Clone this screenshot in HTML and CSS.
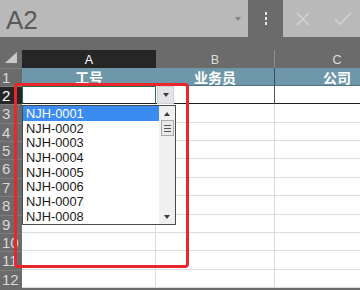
FILE: index.html
```html
<!DOCTYPE html>
<html lang="zh">
<head>
    <meta charset="UTF-8" />
    <meta name="viewport" content="width=device-width, initial-scale=1" />
    <title>数据验证下拉列表</title>
    <link rel="stylesheet" href="styles.css">
</head>
<body>
    <div class="app">
        <!-- Formula bar -->
        <div class="formula-bar">
            <div class="name-box">
                <span class="name">A2</span>
                <span class="name-arrow"></span>
            </div>
            <div class="menu">
                <i></i><i></i><i></i>
            </div>
            <div class="actions">
                <svg width="16" height="16" viewBox="0 0 16 16"><path d="M2 2 L14 14 M14 2 L2 14" stroke="#d2d2d2" stroke-width="1.6" fill="none"/></svg>
                <svg width="20" height="16" viewBox="0 0 20 16"><path d="M2 8 L7 13 L18 2" stroke="#d2d2d2" stroke-width="1.6" fill="none"/></svg>
            </div>
        </div>

        <!-- Sheet grid -->
        <div class="sheet">
            <div class="corner">
                <svg width="22" height="17" viewBox="0 0 22 17"><polygon points="17,2 17,13 5,13" fill="#c9c9c9"/></svg>
            </div>
            <div class="col-head active">A</div>
            <div class="col-head split">B</div>
            <div class="col-head">C</div>

            <div class="row-head">1</div>
            <div class="cell title">工号</div>
            <div class="cell title split">业务员</div>
            <div class="cell title">公司</div>

            <div class="row-head active">2</div>
            <div class="cell current"></div>
            <div class="cell edge split"></div>
            <div class="cell edge"></div>

            <div class="row-head">3</div><div class="cell"></div><div class="cell"></div><div class="cell"></div>
            <div class="row-head">4</div><div class="cell"></div><div class="cell"></div><div class="cell"></div>
            <div class="row-head">5</div><div class="cell"></div><div class="cell"></div><div class="cell"></div>
            <div class="row-head">6</div><div class="cell"></div><div class="cell"></div><div class="cell"></div>
            <div class="row-head">7</div><div class="cell"></div><div class="cell"></div><div class="cell"></div>
            <div class="row-head">8</div><div class="cell"></div><div class="cell"></div><div class="cell"></div>
            <div class="row-head">9</div><div class="cell"></div><div class="cell"></div><div class="cell"></div>
            <div class="row-head">10</div><div class="cell"></div><div class="cell"></div><div class="cell"></div>
            <div class="row-head">11</div><div class="cell"></div><div class="cell"></div><div class="cell"></div>
            <div class="row-head">12</div><div class="cell"></div><div class="cell"></div><div class="cell"></div>

            <!-- Validation dropdown button -->
            <div class="drop-btn"><span class="tri"></span></div>

            <!-- Validation list -->
            <div class="drop-list">
                <ul class="items">
                    <li class="selected">NJH-0001</li>
                    <li>NJH-0002</li>
                    <li>NJH-0003</li>
                    <li>NJH-0004</li>
                    <li>NJH-0005</li>
                    <li>NJH-0006</li>
                    <li>NJH-0007</li>
                    <li>NJH-0008</li>
                </ul>
                <div class="scrollbar">
                    <span class="tri up"></span>
                    <div class="thumb"><i></i><i></i><i></i></div>
                    <span class="tri down"></span>
                </div>
            </div>

            <!-- Red annotation box -->
            <div class="mark"></div>
        </div>
    </div>
</body>
</html>
```

FILE: styles.css
```css
* {
    box-sizing: border-box;
    margin: 0;
    padding: 0;
}

html, body {
    width: 360px;
    height: 290px;
    overflow: hidden;
}

body {
    font-family: 'Liberation Sans', Arial, 'Noto Sans CJK SC', sans-serif;
    background: #6b6b6b;
}

.app {
    width: 360px;
    height: 290px;
    overflow: hidden;
    background: #6b6b6b;
}

/* Formula bar */
.formula-bar {
    display: flex;
    height: 37px;
    margin-bottom: 13px;
}

.name-box {
    width: 248px;
    background: #b9b9b9;
    display: flex;
    align-items: center;
    justify-content: space-between;
    padding: 0 7px 0 6px;
}

.name {
    font-size: 26px;
    color: #5a5a5a;
    line-height: 1;
    margin-top: 2px;
}

.name-arrow {
    width: 0;
    height: 0;
    border-left: 3.5px solid transparent;
    border-right: 3.5px solid transparent;
    border-top: 4px solid #858585;
}

.menu {
    width: 35px;
    display: flex;
    flex-direction: column;
    align-items: center;
    justify-content: center;
    gap: 2px;
    padding-left: 1px;
}

.menu i {
    display: block;
    width: 2px;
    height: 3px;
    background: #e6e6e6;
}

.actions {
    flex: 1;
    background: #b9b9b9;
    display: flex;
    align-items: center;
    justify-content: space-between;
    padding: 0 7px 0 12px;
}

/* Sheet */
.sheet {
    position: relative;
    display: grid;
    grid-template-columns: 22px 134px 119px 124px;
    grid-template-rows: 17.5px repeat(12, 18.4px);
    background: #fff;
}

.corner {
    background: #6b6b6b;
}

.corner svg {
    display: block;
}

.col-head {
    background: #6b6b6b;
    color: #dedede;
    font-size: 12.5px;
    text-align: center;
    line-height: 21px;
}

.col-head.active {
    background: #262626;
    color: #fff;
}

.col-head.split {
    border-right: 1px solid #8c8c8c;
}

.row-head {
    background: #6b6b6b;
    color: #d8d8d8;
    font-size: 15px;
    line-height: 17px;
    padding-left: 2px;
    white-space: nowrap;
    border-top: 1px solid #7e7e7e;
}

.row-head.active {
    background: #262626;
    color: #fff;
}

/* cells paint over the wide row numbers, as the sheet does */
.cell {
    background: #fff;
    border-right: 1px solid #dcdcdc;
    border-bottom: 1px solid #dcdcdc;
}

.cell.title {
    background: #6e98aa;
    color: #fff;
    font-family: 'Noto Sans CJK SC', sans-serif;
    font-weight: 700;
    font-size: 14px;
    line-height: 19px;
    text-align: center;
    border-bottom: 1px solid #4f7584;
    border-right: none;
}

.cell.title.split {
    border-right: 1px solid #33505c;
}

.cell.edge {
    border-bottom: 1px solid #1e1e1e;
}

.cell.edge.split {
    border-right: 1px solid #555;
}

.cell.current {
    border: 1px solid #2d6a48;
    border-bottom: 1px solid #1e1e1e;
}

/* Dropdown button beside the active cell */
.drop-btn {
    position: absolute;
    left: 157px;
    top: 36px;
    width: 17px;
    height: 18px;
    background: #e3e3e8;
    border: 1px solid #cfcfd4;
    display: flex;
    align-items: center;
    justify-content: center;
}

.tri {
    display: block;
    width: 0;
    height: 0;
    border-left: 3.5px solid transparent;
    border-right: 3.5px solid transparent;
    border-top: 4px solid #3c3c3c;
}

.tri.up {
    border-top: none;
    border-bottom: 4px solid #3c3c3c;
}

/* Validation list */
.drop-list {
    position: absolute;
    left: 22px;
    top: 55px;
    width: 154px;
    height: 120px;
    background: #fff;
    border: 1px solid #4a4a4a;
    display: flex;
}

.items {
    list-style: none;
    flex: 1;
}

.items li {
    height: 14.7px;
    line-height: 15px;
    font-size: 12.8px;
    color: #1a1a1a;
    padding-left: 3px;
}

.items li.selected {
    background: #3a8cf0;
    color: #fff;
}

.scrollbar {
    width: 16px;
    background: #f0f0f0;
    display: flex;
    flex-direction: column;
    align-items: center;
    padding: 6px 0 5px;
}

.scrollbar .tri.down {
    margin-top: auto;
}

.thumb {
    width: 13px;
    height: 16px;
    margin-top: 4px;
    background: #e9e9e9;
    border: 1px solid #a9a9a9;
    display: flex;
    flex-direction: column;
    align-items: center;
    justify-content: center;
    gap: 2px;
}

.thumb i {
    display: block;
    width: 7px;
    height: 1px;
    background: #555;
}

/* Red annotation */
.mark {
    position: absolute;
    left: 14px;
    top: 33px;
    width: 175px;
    height: 185px;
    border: 3px solid #e8262b;
    border-radius: 4px;
    pointer-events: none;
}
```
